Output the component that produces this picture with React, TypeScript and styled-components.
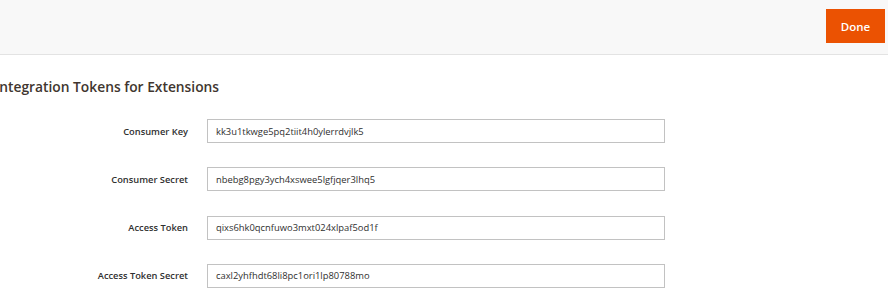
import styled, { createGlobalStyle } from 'styled-components'

const GlobalStyle = createGlobalStyle`
    html, body {
        margin: 0;
        padding: 0;
        background: #fff;
        font-family: "Open Sans", "Liberation Sans", sans-serif;
        color: #303030;
    }
`

const Page = styled.div`
    width: 888px;
    height: 308px;
    overflow: hidden;
`

const Header = styled.div`
    height: 55px;
    box-sizing: border-box;
    background: #f8f8f8;
    border-bottom: 1px solid #e3e3e3;
    display: flex;
    justify-content: flex-end;
    align-items: flex-start;
    padding: 9px 3px 0 0;
`

const DoneButton = styled.button`
    height: 34px;
    width: 59px;
    background: #eb5202;
    border: 1px solid #eb5202;
    color: #fff;
    font-family: "Open Sans", sans-serif;
    font-size: 11.5px;
    font-weight: 600;
    padding: 0;
`

const Content = styled.div`
    padding: 23px 0 0 0;
    margin-left: -5px;
`

const Legend = styled.div`
    font-size: 13.8px;
    font-weight: 600;
    color: #41362f;
    line-height: 18px;
    margin-bottom: 23px;
`

const Fields = styled.div`
    display: flex;
    flex-direction: column;
    gap: 24.3px;
`

const Row = styled.div`
    display: grid;
    grid-template-columns: 193px 458px;
    column-gap: 19px;
    align-items: center;
`

const Label = styled.label`
    text-align: right;
    font-size: 9.3px;
    font-weight: 600;
    color: #303030;
`

const Input = styled.input`
    box-sizing: border-box;
    height: 24px;
    width: 100%;
    border: 1px solid #c2c2c2;
    padding: 0 8px;
    font-family: "Open Sans", sans-serif;
    font-size: 9.4px;
    color: #303030;
    outline: none;
`

const tokens = [
    { label: 'Consumer Key', value: 'kk3u1tkwge5pq2tiit4h0ylerrdvjlk5' },
    { label: 'Consumer Secret', value: 'nbebg8pgy3ych4xswee5lgfjqer3lhq5' },
    { label: 'Access Token', value: 'qixs6hk0qcnfuwo3mxt024xlpaf5od1f' },
    { label: 'Access Token Secret', value: 'caxl2yhfhdt68li8pc1ori1lp80788mo' },
]

export default function App() {
    return (
        <Page>
            <GlobalStyle />
            <Header>
                <DoneButton>Done</DoneButton>
            </Header>
            <Content>
                <Legend>Integration Tokens for Extensions</Legend>
                <Fields>
                    {tokens.map((t) => (
                        <Row key={t.label}>
                            <Label>{t.label}</Label>
                            <Input readOnly value={t.value} />
                        </Row>
                    ))}
                </Fields>
            </Content>
        </Page>
    )
}
